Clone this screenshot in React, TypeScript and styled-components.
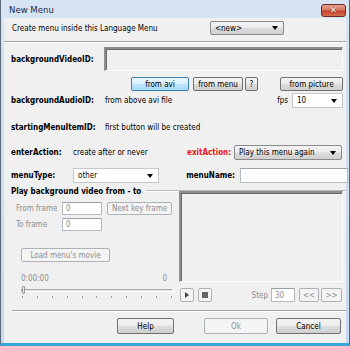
import React from 'react';
import styled, { createGlobalStyle, css } from 'styled-components';

const Global = createGlobalStyle`
  html, body { margin: 0; padding: 0; background: #f0f0f0; }
  body { font-family: "DejaVu Sans Condensed", "Liberation Sans", Arial, sans-serif; font-size: 8px; color: #000; }
  * { box-sizing: border-box; }
`;

const Win = styled.div`
  width: 350px;
  height: 346px;
  display: flex;
  flex-direction: column;
  background: linear-gradient(#d6e4f3, #c6d8ec);
  border-left: 1px solid #5a6878;
  border-right: 1px solid #5a6878;
  padding: 0 3px 0 3px;
  border-bottom: 3px solid #35a8da;
`;

const TitleBar = styled.div`
  height: 18px;
  display: flex;
  align-items: center;
  justify-content: space-between;
  padding-left: 5px;
`;

const Title = styled.span`
  font-size: 9.5px;
  color: #1b2a3c;
`;

const Close = styled.div`
  width: 25px;
  height: 13px;
  margin-top: 2px;
  border-radius: 3px;
  border: 1px solid #6d2a25;
  background: linear-gradient(#e6a290 0%, #d8775f 45%, #c5422b 55%, #d46f4f 100%);
  display: flex;
  align-items: center;
  justify-content: center;
  color: #fff;
  font-weight: bold;
  font-size: 9px;
  line-height: 1;
  text-shadow: 0 0 1px #5a1a10;
`;

const Content = styled.div`
  flex: 1;
  background: #f0f0f0;
  display: flex;
  flex-direction: column;
`;

const Row = styled.div<{ $mt?: number; $h: number; $pl?: number; $pr?: number }>`
  display: flex;
  align-items: center;
  margin-top: ${(p) => p.$mt ?? 0}px;
  height: ${(p) => p.$h}px;
  padding-left: ${(p) => p.$pl ?? 0}px;
  padding-right: ${(p) => p.$pr ?? 0}px;
`;

const Label = styled.span<{ $w?: number; $bold?: boolean; $red?: boolean; $gray?: boolean; $right?: boolean }>`
  display: inline-block;
  flex: none;
  ${(p) => p.$w !== undefined && css`width: ${p.$w}px;`}
  font-weight: ${(p) => (p.$bold ? 'bold' : 'normal')};
  font-size: 8px;
  color: ${(p) => (p.$red ? '#e8141e' : p.$gray ? '#8d8d8d' : '#000')};
  text-align: ${(p) => (p.$right ? 'right' : 'left')};
  white-space: nowrap;
`;

const Sep = styled.div<{ $mt: number; $ml?: number }>`
  margin-top: ${(p) => p.$mt}px;
  margin-left: ${(p) => p.$ml ?? 0}px;
  height: 2px;
  border-top: 1px solid #a0a0a0;
  border-bottom: 1px solid #ffffff;
`;

const Body = styled.div`
  display: flex;
  flex-direction: column;
  padding: 0 3px 0 7px;
`;

const Sunken = styled.div<{ $w?: number; $h: number }>`
  ${(p) => (p.$w ? css`width: ${p.$w}px;` : css`flex: 1;`)}
  height: ${(p) => p.$h}px;
  border-top: 2px solid #8e8e8e;
  border-left: 2px solid #8e8e8e;
  border-right: 1px solid #fdfdfd;
  border-bottom: 1px solid #fdfdfd;
  box-shadow: inset 1px 1px 0 #6a6a6a;
  background: #f0f0f0;
`;

const Input = styled.div<{ $w: number; $ml?: number; $disabled?: boolean }>`
  width: ${(p) => p.$w}px;
  height: 100%;
  margin-left: ${(p) => p.$ml ?? 0}px;
  flex: none;
  background: #fff;
  border: 1px solid #b5b9c0;
  border-top-color: #9aa0a8;
  display: flex;
  align-items: center;
  padding-left: 3px;
  color: ${(p) => (p.$disabled ? '#8d8d8d' : '#000')};
`;

const Button = styled.div<{ $w: number; $ml?: number; $disabled?: boolean; $focus?: boolean }>`
  width: ${(p) => p.$w}px;
  height: 100%;
  margin-left: ${(p) => p.$ml ?? 0}px;
  flex: none;
  border-radius: 2px;
  display: flex;
  align-items: center;
  justify-content: center;
  white-space: nowrap;
  border: 1px solid #707070;
  color: #000;
  background: linear-gradient(#f3f3f3 0%, #ebebeb 48%, #dddddd 52%, #cfcfcf 100%);
  ${(p) =>
    p.$focus &&
    css`
      border-color: #3c7fb1;
      background: linear-gradient(#eaf6fd 0%, #d9f0fc 48%, #bee6fd 52%, #a7d9f5 100%);
    `}
  ${(p) =>
    p.$disabled &&
    css`
      border-color: #adb2b5;
      background: #f4f4f4;
      color: #8d8d8d;
    `}
`;

const Select = styled.div<{ $w: number; $ml?: number; $flat?: boolean }>`
  width: ${(p) => p.$w}px;
  height: 100%;
  margin-left: ${(p) => p.$ml ?? 0}px;
  flex: none;
  display: flex;
  align-items: center;
  justify-content: space-between;
  padding: 0 5px 0 4px;
  border-radius: 2px;
  border: 1px solid #8a8a8a;
  background: linear-gradient(#f3f3f3 0%, #ebebeb 48%, #dddddd 52%, #cfcfcf 100%);
  white-space: nowrap;
  ${(p) =>
    p.$flat &&
    css`
      border-radius: 0;
      border-color: #c4c7cc;
      background: #fff;
    `}
`;

const Arrow = styled.span`
  width: 0;
  height: 0;
  border-left: 3.5px solid transparent;
  border-right: 3.5px solid transparent;
  border-top: 4px solid #000;
`;

const Spacer = styled.div`
  flex: 1;
`;

const GroupTitle = styled.div`
  display: flex;
  align-items: center;
  height: 10px;
  margin-top: 3px;
  font-weight: bold;
  white-space: nowrap;
  gap: 5px;
`;

const GroupLine = styled.div`
  flex: 1;
  height: 2px;
  border-top: 1px solid #b8b8b8;
  border-bottom: 1px solid #fff;
  margin-right: -3px;
`;

const GroupBody = styled.div`
  display: flex;
  margin-top: -5px;
`;

const LeftCol = styled.div`
  width: 168px;
  display: flex;
  flex-direction: column;
`;

const RightCol = styled.div`
  flex: 1;
  display: flex;
  flex-direction: column;
`;

const TimeRow = styled.div`
  margin-top: 11px;
  height: 10px;
  width: 146px;
  margin-left: 10px;
  display: flex;
  justify-content: space-between;
  align-items: center;
  color: #8d8d8d;
`;

const Slider = styled.div`
  margin-top: 3px;
  margin-left: 10px;
  width: 152px;
  height: 16px;
  display: flex;
  flex-direction: column;
  position: relative;
`;

const Track = styled.div`
  margin-top: 3px;
  height: 3px;
  border-top: 1px solid #a8a8a8;
  border-left: 1px solid #a8a8a8;
  border-bottom: 1px solid #fff;
  border-right: 1px solid #fff;
  background: #e6e6e6;
`;

const Thumb = styled.div`
  position: absolute;
  left: 1px;
  top: 0px;
  width: 3px;
  height: 8px;
  border: 1px solid #9a9a9a;
  border-radius: 1px 1px 2px 2px;
  background: #e8e8e8;
`;

const Ticks = styled.div`
  margin-top: 4px;
  display: flex;
  justify-content: space-between;
  padding: 0 1px;
`;

const Tick = styled.span`
  width: 1px;
  height: 2px;
  background: #9a9a9a;
`;

const Glyph = styled.span<{ $kind: 'play' | 'stop' }>`
  display: inline-block;
  ${(p) =>
    p.$kind === 'play'
      ? css`
          width: 0;
          height: 0;
          border-top: 3.5px solid transparent;
          border-bottom: 3.5px solid transparent;
          border-left: 4px solid #444;
        `
      : css`
          width: 6px;
          height: 6px;
          background: #666;
        `}
`;

const Footer = styled.div`
  display: flex;
  justify-content: flex-end;
  margin-top: 6px;
  height: 16px;
  padding-right: 5px;
`;

export default function App() {
  return (
    <>
      <Global />
      <Win>
        <TitleBar>
          <Title>New Menu</Title>
          <Close>✕</Close>
        </TitleBar>
        <Content>
          <Row $mt={3} $h={14} $pl={8}>
            <Label $w={198}>Create menu inside this Language Menu</Label>
            <Select $w={74}>
              <span>&lt;new&gt;</span>
              <Arrow />
            </Select>
          </Row>
          <Sep $mt={6} />
          <Body>
            <Row $mt={4} $h={24}>
              <Label $w={93} $bold>backgroundVideoID:</Label>
              <Sunken $h={24} />
            </Row>
            <Row $mt={6} $h={14}>
              <Button $w={58} $ml={120} $focus>from avi</Button>
              <Button $w={50} $ml={4}>from menu</Button>
              <Button $w={13} $ml={2}>?</Button>
              <Spacer />
              <Button $w={63}>from picture</Button>
            </Row>
            <Row $mt={2} $h={15}>
              <Label $w={94} $bold>backgroundAudioID:</Label>
              <Label>from above avi file</Label>
              <Spacer />
              <Label>fps</Label>
              <Select $w={51} $ml={4} $flat>
                <span>10</span>
                <Arrow />
              </Select>
            </Row>
            <Row $mt={12} $h={14}>
              <Label $w={94} $bold>startingMenuItemID:</Label>
              <Label>first button will be created</Label>
            </Row>
            <Row $mt={11} $h={15}>
              <Label $w={62} $bold>enterAction:</Label>
              <Label $w={114}>create after or never</Label>
              <Label $w={42} $bold $red $right>exitAction:</Label>
              <Select $w={108} $ml={5}>
                <span>Play this menu again</span>
                <Arrow />
              </Select>
            </Row>
            <Row $mt={8} $h={15}>
              <Label $w={62} $bold>menuType:</Label>
              <Select $w={86} $flat>
                <span>other</span>
                <Arrow />
              </Select>
              <Label $w={76} $bold $right>menuName:</Label>
              <Input $w={108} $ml={5} />
            </Row>
            <GroupTitle>
              <span>Play background video from - to</span>
              <GroupLine />
            </GroupTitle>
            <GroupBody>
              <LeftCol>
                <Row $mt={11} $h={13} $pl={5}>
                  <Label $w={46} $gray>From frame</Label>
                  <Input $w={40} $disabled>0</Input>
                  <Button $w={65} $ml={5} $disabled>Next key frame</Button>
                </Row>
                <Row $mt={3} $h={13} $pl={5}>
                  <Label $w={46} $gray>To frame</Label>
                  <Input $w={40} $disabled>0</Input>
                </Row>
                <Row $mt={17} $h={14} $pl={10}>
                  <Button $w={89} $disabled>Load menu's movie</Button>
                </Row>
                <TimeRow>
                  <span>0:00:00</span>
                  <span>0</span>
                </TimeRow>
                <Slider>
                  <Track />
                  <Thumb />
                  <Ticks>
                    {Array.from({ length: 11 }).map((_, i) => (
                      <Tick key={i} />
                    ))}
                  </Ticks>
                </Slider>
              </LeftCol>
              <RightCol>
                <Sunken $h={89} />
                <Row $mt={6} $h={14} $pl={1} $pr={1}>
                  <Button $w={14} $disabled>
                    <Glyph $kind="play" />
                  </Button>
                  <Button $w={14} $ml={4} $disabled>
                    <Glyph $kind="stop" />
                  </Button>
                  <Spacer />
                  <Label $gray>Step</Label>
                  <Input $w={24} $ml={3} $disabled>30</Input>
                  <Button $w={20} $ml={4} $disabled>&lt;&lt;</Button>
                  <Button $w={21} $ml={2} $disabled>&gt;&gt;</Button>
                </Row>
              </RightCol>
            </GroupBody>
          </Body>
          <Sep $mt={8} $ml={8} />
          <Footer>
            <Button $w={57}>Help</Button>
            <Button $w={64} $ml={30} $disabled>Ok</Button>
            <Button $w={65} $ml={8}>Cancel</Button>
          </Footer>
        </Content>
      </Win>
    </>
  );
}
